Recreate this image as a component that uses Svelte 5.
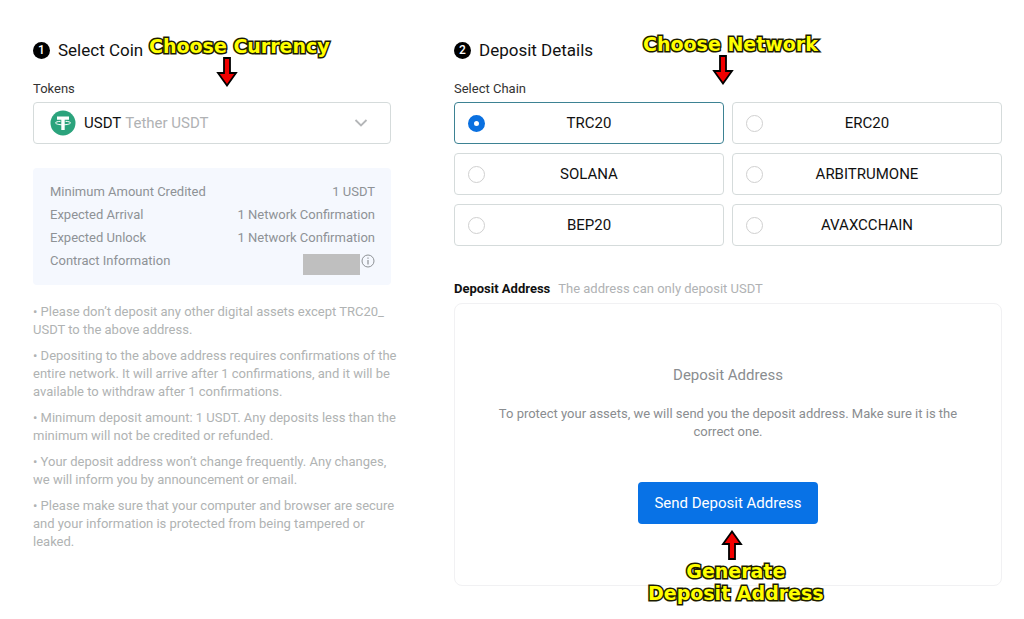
<script lang="ts">
  const tokens = [
    { code: 'USDT', name: 'Tether USDT' },
  ];

  const chains = ['TRC20', 'ERC20', 'SOLANA', 'ARBITRUMONE', 'BEP20', 'AVAXCCHAIN'];

  const notes = [
    'Please don’t deposit any other digital assets except TRC20_ USDT to the above address.',
    'Depositing to the above address requires confirmations of the entire network. It will arrive after 1 confirmations, and it will be available to withdraw after 1 confirmations.',
    'Minimum deposit amount: 1 USDT. Any deposits less than the minimum will not be credited or refunded.',
    'Your deposit address won’t change frequently. Any changes, we will inform you by announcement or email.',
    'Please make sure that your computer and browser are secure and your information is protected from being tampered or leaked.',
  ];

  let code = $state('USDT');
  let chain = $state('TRC20');

  const token = $derived(tokens.find((t) => t.code === code) ?? tokens[0]);
</script>

{#snippet arrow(up: boolean)}
  <svg class="arrow" class:up width="22" height="30" viewBox="0 0 22 30" aria-hidden="true">
    <path d="M8 1h6v15h6L11 28.5 2 16h6z" fill="#f20000" stroke="#000" stroke-width="1.8" />
  </svg>
{/snippet}

<main>
  <section class="column">
    <h2><span class="step">1</span>Select Coin</h2>

    <div class="callout currency">
      <span>Choose Currency</span>
      {@render arrow(false)}
    </div>

    <label class="field-label" for="token">Tokens</label>
    <div class="token-field">
      <select id="token" bind:value={code}>
        {#each tokens as t}
          <option value={t.code}>{t.code} {t.name}</option>
        {/each}
      </select>
      <div class="token-value" aria-hidden="true">
        <svg width="26" height="26" viewBox="0 0 26 26">
          <circle cx="13" cy="13" r="12.5" fill="#2ba37c" />
          <path d="M7 6.5h12v3.3h-4.3V20h-3.4V9.800H7z" fill="#fff" />
          <path
            d="M10.500 11.300c-3 .2-5 .8-5 1.600 0 1 3.400 1.900 7.500 1.900s7.500-.9 7.500-1.900c0-.8-2-1.400-5-1.600"
            fill="none"
            stroke="#fff"
          />
        </svg>
        <span class="code">{token.code}</span>
        <span class="name">{token.name}</span>
        <svg class="chevron" width="14" height="8" viewBox="0 0 14 8">
          <path d="M1.500 1 7 6.500 12.500 1" fill="none" stroke="#b4b6b8" stroke-width="1.800" />
        </svg>
      </div>
    </div>

    <dl>
      <div>
        <dt>Minimum Amount Credited</dt>
        <dd>1 USDT</dd>
      </div>
      <div>
        <dt>Expected Arrival</dt>
        <dd>1 Network Confirmation</dd>
      </div>
      <div>
        <dt>Expected Unlock</dt>
        <dd>1 Network Confirmation</dd>
      </div>
      <div>
        <dt>Contract Information</dt>
        <dd class="contract">
          <span class="redacted"></span>
          <button class="info" aria-label="Contract information">
            <svg width="14" height="14" viewBox="0 0 14 14">
              <circle cx="7" cy="7" r="6" fill="none" stroke="#8e9296" />
              <path d="M7 6v4.500M7 3.500v1.300" stroke="#8e9296" stroke-width="1.200" />
            </svg>
          </button>
        </dd>
      </div>
    </dl>

    <div class="notes">
      {#each notes as note}
        <p>• {note}</p>
      {/each}
    </div>
  </section>

  <section class="column">
    <h2><span class="step">2</span>Deposit Details</h2>

    <div class="callout network">
      <span>Choose Network</span>
      {@render arrow(false)}
    </div>

    <fieldset>
      <legend class="field-label">Select Chain</legend>
      <div class="chains">
        {#each chains as name}
          <label class="chain" class:selected={chain === name}>
            <input type="radio" name="chain" value={name} bind:group={chain} />
            <span>{name}</span>
          </label>
        {/each}
      </div>
    </fieldset>

    <div class="address-head">
      <h3>Deposit Address</h3>
      <span>The address can only deposit USDT</span>
    </div>

    <div class="panel">
      <h4>Deposit Address</h4>
      <p>
        To protect your assets, we will send you the deposit address. Make sure it is the correct
        one.
      </p>
      <button class="send">Send Deposit Address</button>

      <div class="callout generate">
        {@render arrow(true)}
        <span>Generate<br />Deposit Address</span>
      </div>
    </div>
  </section>
</main>

<style>
  :global(body) {
    margin: 0;
    background: #fff;
  }

  main {
    display: grid;
    grid-template-columns: minmax(0, 358fr) minmax(0, 548fr);
    gap: 63px;
    padding: 40px 22px 32px 33px;
    font-family: Roboto, 'Liberation Sans', sans-serif;
    font-size: 13px;
    line-height: 18px;
    color: #1c1e20;
  }

  .column {
    position: relative;
  }

  h2 {
    display: flex;
    align-items: center;
    gap: 8px;
    margin: 0 0 20px;
    font-size: 17px;
    font-weight: 400;
    line-height: 20px;
    color: #111;
  }

  .step {
    width: 17px;
    height: 17px;
    border-radius: 50%;
    background: #000;
    color: #fff;
    font-size: 12px;
    font-weight: 500;
    line-height: 17px;
    text-align: center;
  }

  .field-label {
    display: block;
    margin-bottom: 4px;
    padding: 0;
    color: #333;
  }

  .token-field {
    display: grid;
  }

  .token-field > * {
    grid-area: 1 / 1;
  }

  select {
    appearance: none;
    width: 100%;
    height: 42px;
    border: 1px solid #d5dbdb;
    border-radius: 4px;
    background: #fff;
    color: transparent;
    font: inherit;
    cursor: pointer;
  }

  option {
    color: #111;
  }

  .token-value {
    display: flex;
    align-items: center;
    padding: 0 23px 0 17px;
    font-size: 15px;
    pointer-events: none;
  }

  .code {
    margin: 0 4px 0 8px;
    color: #111;
  }

  .name {
    flex: 1;
    color: #b0b2b4;
  }

  dl {
    margin: 24px 0 18px;
    padding: 12px 16px 13px 17px;
    border-radius: 4px;
    background: #f5f8fe;
    color: #8e9296;
    line-height: 23px;
  }

  dl > div {
    display: flex;
    justify-content: space-between;
    height: 23px;
  }

  dd {
    margin: 0;
  }

  .contract {
    display: flex;
    align-items: flex-start;
  }

  .redacted {
    width: 57px;
    height: 21px;
    margin-top: 5px;
    background: #bfbfbf;
  }

  .info {
    display: flex;
    padding: 5px 0 0 1px;
    border: 0;
    background: none;
    cursor: pointer;
  }

  .notes {
    display: flex;
    flex-direction: column;
    gap: 8px;
    margin-right: -8px;
    color: #b0b3b3;
  }

  p {
    margin: 0;
  }

  fieldset {
    margin: 0 0 34px;
    padding: 0;
    border: 0;
  }

  .chains {
    display: grid;
    grid-template-columns: 1fr 1fr;
    gap: 9px 8px;
  }

  .chain {
    display: grid;
    grid-template-columns: 17px 1fr 17px;
    align-items: center;
    height: 42px;
    padding: 0 13px;
    box-sizing: border-box;
    border: 1px solid #d5dbdb;
    border-radius: 4px;
    font-size: 15px;
    text-align: center;
    color: #111;
    cursor: pointer;
  }

  .chain.selected {
    border-color: #3d8293;
  }

  .chain input {
    appearance: none;
    width: 17px;
    height: 17px;
    margin: 0;
    box-sizing: border-box;
    border: 1px solid #d0d0d0;
    border-radius: 50%;
    background: #fff;
  }

  .chain input:checked {
    border: 6px solid #0a70e0;
  }

  .address-head {
    display: flex;
    gap: 8px;
    margin-bottom: 5px;
    color: #b0b2b4;
  }

  h3 {
    margin: 0;
    font-size: 13px;
    font-weight: 700;
    color: #111;
  }

  .panel {
    position: relative;
    display: flex;
    flex-direction: column;
    align-items: center;
    padding: 61px 40px;
    border: 1px solid #f1f1f3;
    border-radius: 8px;
    text-align: center;
    color: #8a8d90;
  }

  h4 {
    margin: 0 0 20px;
    font-size: 15px;
    font-weight: 400;
    line-height: 20px;
  }

  .send {
    height: 42px;
    margin-top: 41px;
    padding: 0 16px;
    border: 0;
    border-radius: 4px;
    background: #0872e6;
    color: #fff;
    font: inherit;
    font-size: 15px;
    cursor: pointer;
  }

  /* Yellow hints laid over the form */
  .callout {
    position: absolute;
    display: flex;
    flex-direction: column;
    font-family: 'DejaVu Sans', Verdana, sans-serif;
    font-size: 18px;
    font-weight: 700;
    line-height: 22px;
    color: #ff0;
    white-space: nowrap;
    pointer-events: none;
  }

  .callout span {
    -webkit-text-stroke: 3px #1c1c00;
    paint-order: stroke fill;
    text-align: center;
  }

  .currency,
  .network,
  .generate {
    font-size: 19px;
  }

  .currency {
    top: -5px;
    left: 116px;
  }

  .currency .arrow {
    margin-left: 67px;
  }

  .network {
    top: -7px;
    left: 189px;
  }

  .network .arrow {
    margin-left: 69px;
  }

  .generate {
    top: 226px;
    left: 50%;
    margin-left: -80px;
  }

  .generate .arrow {
    margin-left: 73px;
  }

  .arrow.up {
    transform: rotate(180deg);
  }
</style>
